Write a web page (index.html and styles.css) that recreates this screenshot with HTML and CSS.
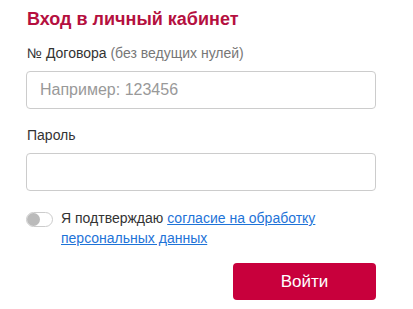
FILE: index.html
```html
<!DOCTYPE html>
<html lang="ru">
<head>
  <meta charset="UTF-8">
  <title>Вход в личный кабинет</title>
  <link rel="stylesheet" href="styles.css">
</head>
<body>
  <form class="login">
    <h2 class="login-title">Вход в личный кабинет</h2>

    <label class="field-label" for="contract">№ Договора <span class="hint">(без ведущих нулей)</span></label>
    <input class="field" type="text" id="contract" placeholder="Например: 123456">

    <label class="field-label" for="password">Пароль</label>
    <input class="field" type="password" id="password">

    <div class="consent">
      <span class="toggle"><span class="toggle-knob"></span></span>
      <p class="consent-text">Я подтверждаю <a href="#">согласие на обработку персональных данных</a></p>
    </div>

    <div class="actions">
      <button class="btn-submit" type="button">Войти</button>
    </div>
  </form>
</body>
</html>
```

FILE: styles.css
```css
body {
  margin: 0;
  font-family: "Liberation Sans", Arial, sans-serif;
  color: #333;
  background: #fff;
}
.login {
  width: 350px;
  padding: 8px 0 0 26px;
}
.login-title {
  margin: 0 0 14px 1px;
  font-size: 18px;
  line-height: 22px;
  color: #b5103f;
}
.field-label {
  display: block;
  margin: 0 0 9px 1px;
  font-size: 14px;
  line-height: 18px;
  color: #333;
}
.hint {
  color: #777;
}
.field {
  display: block;
  box-sizing: border-box;
  width: 350px;
  height: 38px;
  margin: 0 0 17px;
  padding: 0 13px;
  border: 1px solid #ccc;
  border-radius: 4px;
  font-family: inherit;
  font-size: 16px;
  color: #333;
}
.field::placeholder {
  color: #999;
}
.consent {
  display: flex;
  align-items: flex-start;
  gap: 8px;
}
.toggle {
  flex: none;
  position: relative;
  box-sizing: border-box;
  width: 27px;
  height: 15px;
  margin-top: 4px;
  border: 1px solid #ccc;
  border-radius: 8px;
  background: #fff;
}
.toggle-knob {
  position: absolute;
  left: 0;
  top: 0;
  width: 13px;
  height: 13px;
  border-radius: 50%;
  background: #bbb;
}
.consent-text {
  margin: 0;
  font-size: 14px;
  line-height: 20px;
  width: 270px;
}
.consent-text a {
  color: #1e73d8;
}
.actions {
  display: flex;
  justify-content: flex-end;
  margin-top: 15px;
}
.btn-submit {
  width: 143px;
  height: 37px;
  border: 0;
  border-radius: 4px;
  background: #c8003c;
  color: #fff;
  font-family: inherit;
  font-size: 17px;
  cursor: pointer;
}
```
